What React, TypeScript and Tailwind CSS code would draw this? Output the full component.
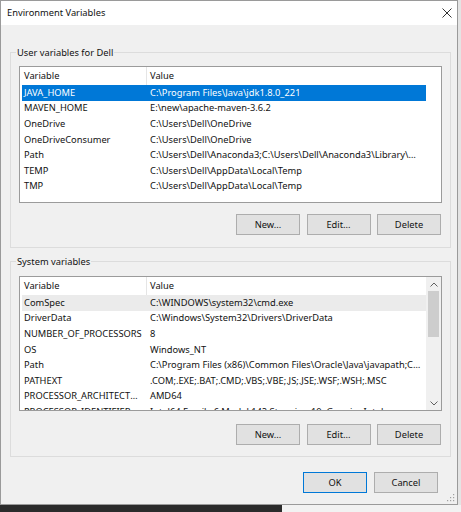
import type { ReactNode } from 'react';

type Row = { name: string; value: string };

const USER_VARS: Row[] = [
  { name: 'JAVA_HOME', value: 'C:\\Program Files\\Java\\jdk1.8.0_221' },
  { name: 'MAVEN_HOME', value: 'E:\\new\\apache-maven-3.6.2' },
  { name: 'OneDrive', value: 'C:\\Users\\Dell\\OneDrive' },
  { name: 'OneDriveConsumer', value: 'C:\\Users\\Dell\\OneDrive' },
  { name: 'Path', value: 'C:\\Users\\Dell\\Anaconda3;C:\\Users\\Dell\\Anaconda3\\Library\\mingw-w64\\bin' },
  { name: 'TEMP', value: 'C:\\Users\\Dell\\AppData\\Local\\Temp' },
  { name: 'TMP', value: 'C:\\Users\\Dell\\AppData\\Local\\Temp' },
];

const SYSTEM_VARS: Row[] = [
  { name: 'ComSpec', value: 'C:\\WINDOWS\\system32\\cmd.exe' },
  { name: 'DriverData', value: 'C:\\Windows\\System32\\Drivers\\DriverData' },
  { name: 'NUMBER_OF_PROCESSORS', value: '8' },
  { name: 'OS', value: 'Windows_NT' },
  { name: 'Path', value: 'C:\\Program Files (x86)\\Common Files\\Oracle\\Java\\javapath;C:\\WINDOWS\\system32' },
  { name: 'PATHEXT', value: '.COM;.EXE;.BAT;.CMD;.VBS;.VBE;.JS;.JSE;.WSF;.WSH;.MSC' },
  { name: 'PROCESSOR_ARCHITECTURE', value: 'AMD64' },
  { name: 'PROCESSOR_IDENTIFIER', value: 'Intel64 Family 6 Model 142 Stepping 10, GenuineIntel' },
];

const FONT = 'font-["Segoe_UI","Noto_Sans",sans-serif] text-[9.3px] leading-none';

// ---------------------------------------------------------------------------
// Win10-style push button
// ---------------------------------------------------------------------------
function Btn({ children, primary = false }: { children: ReactNode; primary?: boolean }) {
  return (
    <button
      type="button"
      className={`h-[21px] w-[64px] flex items-center justify-center bg-[#e1e1e1] text-[#111] ${
        primary ? 'border border-[#0078d7]' : 'border border-[#adadad]'
      }`}
    >
      {children}
    </button>
  );
}

// ---------------------------------------------------------------------------
// Group box with caption sitting on the top border
// ---------------------------------------------------------------------------
function Group({ label, children, className }: { label: string; children: ReactNode; className: string }) {
  return (
    <div className={`relative border border-[#dcdcdc] px-[8px] ${className}`}>
      <span className="absolute -top-[7px] left-[5px] bg-[#f0f0f0] px-[1px] text-[#111] leading-[13px]">
        {label}
      </span>
      {children}
    </div>
  );
}

function Scrollbar() {
  return (
    <div className="w-[15px] shrink-0 bg-[#f0f0f0] flex flex-col items-center">
      <div className="h-[14px] w-full flex items-center justify-center">
        <svg width="8" height="5" viewBox="0 0 8 5">
          <path d="M0.5 4.5 L4 1 L7.5 4.5" fill="none" stroke="#606060" strokeWidth="1" />
        </svg>
      </div>
      <div className="h-[46px] w-[11px] bg-[#cdcdcd]" />
      <div className="flex-1" />
      <div className="h-[14px] w-full flex items-center justify-center">
        <svg width="8" height="5" viewBox="0 0 8 5">
          <path d="M0.5 0.5 L4 4 L7.5 0.5" fill="none" stroke="#606060" strokeWidth="1" />
        </svg>
      </div>
    </div>
  );
}

// ---------------------------------------------------------------------------
// ListView with Variable / Value columns
// ---------------------------------------------------------------------------
function VarList({
  rows,
  height,
  selected,
  hover,
  scroll = false,
}: {
  rows: Row[];
  height: string;
  selected?: number;
  hover?: number;
  scroll?: boolean;
}) {
  return (
    <div className={`${height} border border-[#9b9b9b] bg-white flex overflow-hidden`}>
      <div className="flex-1 min-w-0 pl-[2px] flex flex-col">
        <div className="h-[18px] shrink-0 flex items-center text-[#111]">
          <div className="w-[124px] shrink-0 pl-[2px]">Variable</div>
          <div className="flex-1 h-full flex items-center border-l border-[#e5e5e5] pl-[3px]">Value</div>
        </div>
        {rows.map((r, i) => {
          const sel = i === selected;
          const hov = i === hover;
          return (
            <div
              key={r.name}
              className={`h-[15.6px] shrink-0 flex items-center ${
                sel ? 'bg-[#0078d7] text-white' : hov ? 'bg-[#ebebeb] text-[#111]' : 'text-[#111]'
              }`}
            >
              <div className="w-[124px] shrink-0 pl-[2px] pr-[3px] truncate leading-[14px]">{r.name}</div>
              <div className="flex-1 min-w-0 pl-[4px] pr-[4px] truncate leading-[14px]">{r.value}</div>
            </div>
          );
        })}
      </div>
      {scroll ? <Scrollbar /> : <div className="w-[15px] shrink-0" />}
    </div>
  );
}

export default function App() {
  return (
    <div className={`w-[461px] h-[512px] flex flex-col bg-[#dedede] ${FONT}`}>
      <div className="flex h-[505px]">
        <div className="relative w-[458px] h-full border border-[#9a9a9a] flex flex-col">
          {/* Title bar */}
          <div className="h-[24px] shrink-0 bg-white flex items-center justify-between pl-[6px] pr-[5px]">
            <span className="text-[#111]">Environment Variables</span>
            <svg width="10" height="10" viewBox="0 0 10 10">
              <path d="M0.5 0.5 L9.5 9.5 M9.5 0.5 L0.5 9.5" stroke="#333" strokeWidth="1" />
            </svg>
          </div>

          {/* Client area */}
          <div className="flex-1 bg-[#f0f0f0] pl-[9px] pr-[6px] flex flex-col">
            <Group label="User variables for Dell" className="mt-[27px] pt-[13px] pb-[12px]">
              <VarList rows={USER_VARS} height="h-[137px]" selected={0} />
              <div className="mt-[11px] flex justify-end gap-[6.5px] pr-[1px]">
                <Btn>New...</Btn>
                <Btn>Edit...</Btn>
                <Btn>Delete</Btn>
              </div>
            </Group>

            <Group label="System variables" className="mt-[13px] pt-[14px] pb-[11px]">
              <VarList rows={SYSTEM_VARS} height="h-[135px]" hover={0} scroll />
              <div className="mt-[13px] flex justify-end gap-[6.5px] pr-[1px]">
                <Btn>New...</Btn>
                <Btn>Edit...</Btn>
                <Btn>Delete</Btn>
              </div>
            </Group>

            <div className="mt-[15px] flex justify-end gap-[7px] pr-[13px]">
              <Btn primary>OK</Btn>
              <Btn>Cancel</Btn>
            </div>
          </div>

          {/* size grip */}
          <svg className="absolute right-[2px] bottom-[2px]" width="8" height="8" viewBox="0 0 8 8">
            <g fill="#a0a0a0">
              <rect x="6" y="0" width="1.2" height="1.2" />
              <rect x="3" y="3" width="1.2" height="1.2" />
              <rect x="6" y="3" width="1.2" height="1.2" />
              <rect x="0" y="6" width="1.2" height="1.2" />
              <rect x="3" y="6" width="1.2" height="1.2" />
              <rect x="6" y="6" width="1.2" height="1.2" />
            </g>
          </svg>
        </div>
        <div className="flex-1 bg-[#e4e4e4]" />
      </div>
      <div className="flex-1 flex">
        <div className="w-[282px] bg-[#2b2b2b]" />
        <div className="flex-1 bg-[#f2f2f2]" />
      </div>
    </div>
  );
}
